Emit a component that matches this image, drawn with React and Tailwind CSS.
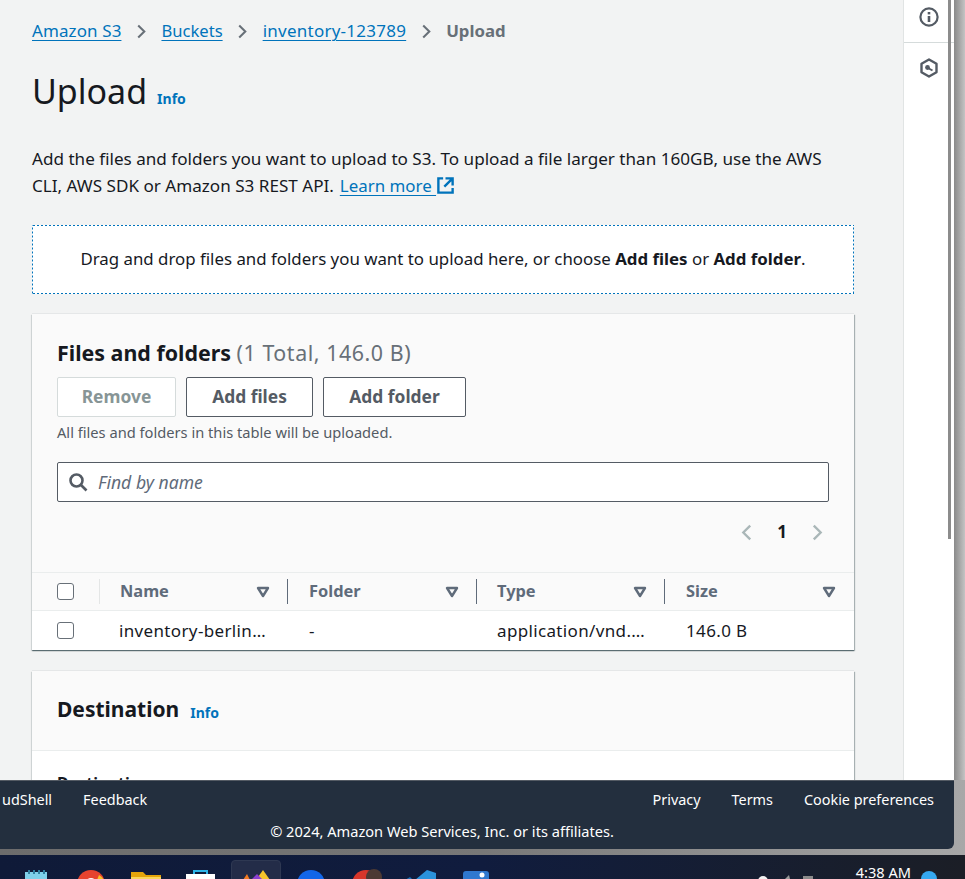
import React from "react";

const font = "font-['Noto_Sans','Open_Sans',sans-serif]";
const cardShadow = "shadow-[0_1px_1px_0_rgba(0,28,36,0.45),1px_1px_1px_0_rgba(0,28,36,0.25),-1px_1px_1px_0_rgba(0,28,36,0.08),0_-1px_0_0_rgba(0,28,36,0.05)]";

function Chevron({ left = false, className }) {
  return (
    <svg viewBox="0 0 10 16" className={className} fill="none">
      <path d={left ? "M8.5 1.5 2 8l6.5 6.5" : "M1.5 1.5 8 8l-6.5 6.5"} stroke="currentColor" strokeWidth="2.2" />
    </svg>
  );
}

function Crumb({ children, className }) {
  return <span className={`underline underline-offset-[3px] decoration-1 ${className}`}>{children}</span>;
}

function Sep() {
  return <Chevron className="w-[11px] h-[15px] mx-[14.5px] text-[#687078]" />;
}

function Caret() {
  return (
    <svg viewBox="0 0 16 16" className="size-[16px] text-[#5f6b7a]">
      <path d="M3 4h10l-5 8z" fill="none" stroke="currentColor" strokeWidth="2.4" strokeLinejoin="round" />
    </svg>
  );
}

function Checkbox() {
  return <div className="size-[17px] rounded-[3px] border border-[#687078] bg-white" />;
}

function HeaderCell({ label, className, divider = true }) {
  return (
    <div className={`flex items-center justify-between h-full ${className}`}>
      <span className="font-bold text-[#5f6b7a] text-[16.4px]">{label}</span>
      <div className="flex items-center">
        <Caret />
        {divider && <div className="w-px h-[25px] bg-[#5f6b7a] ml-[16px]" />}
      </div>
    </div>
  );
}

function Taskbar() {
  return (
    <div className="h-[24px] bg-gradient-to-r from-[#0f1a38] via-[#101c3e] to-[#1b1e26] flex items-start overflow-hidden relative">
      <div className="absolute left-[231px] top-[5px] w-[50px] h-[30px] rounded-[4px] bg-[#232c48] border border-[#2e3852]" />
      <div className="relative flex items-start h-full">
        <svg viewBox="0 0 22 10" className="absolute left-[25px] top-[15px] w-[22px] h-[10px]">
          <rect y="2" width="22" height="8" fill="#7fd0ea" />
          <path d="M3 0h2v4H3zM8 0h2v4H8zM13 0h2v4h-2zM18 0h2v4h-2z" fill="#2f7f9f" />
        </svg>
        <svg viewBox="0 0 28 10" className="absolute left-[77px] top-[15px] w-[28px] h-[10px]">
          <circle cx="14" cy="14" r="14" fill="#e5432f" />
          <circle cx="14" cy="14" r="6" fill="#fff" />
          <path d="M22 5a14 14 0 0 1 5 5h-7z" fill="#f6c026" />
        </svg>
        <svg viewBox="0 0 30 8" className="absolute left-[131px] top-[17px] w-[30px] h-[8px]">
          <path d="M0 0h12l3 3h15v5H0z" fill="#e5a50a" />
          <rect y="5" width="30" height="3" fill="#fbd65a" />
        </svg>
        <svg viewBox="0 0 29 9" className="absolute left-[186px] top-[15px] w-[29px] h-[9px]">
          <path d="M8 5V1h13v4" fill="none" stroke="#2eb4e8" strokeWidth="2" />
          <rect y="4" width="29" height="5" fill="#fff" />
        </svg>
        <svg viewBox="0 0 27 10" className="absolute left-[243px] top-[15px] w-[27px] h-[10px]">
          <path d="M0 10l4-6 3 6z" fill="#f47a20" />
          <path d="M13 10l7-10 7 10z" fill="#f7c52b" />
          <path d="M8 10l6-6 6 6z" fill="#8a3fd0" />
        </svg>
        <svg viewBox="0 0 28 10" className="absolute left-[297px] top-[15px] w-[28px] h-[10px]">
          <circle cx="14" cy="14" r="14" fill="#1266e8" />
        </svg>
        <svg viewBox="0 0 30 11" className="absolute left-[352px] top-[14px] w-[30px] h-[11px]">
          <circle cx="14" cy="15" r="14" fill="#d8362a" />
          <circle cx="22" cy="8" r="8" fill="#4d3a34" />
        </svg>
        <svg viewBox="0 0 31 10" className="absolute left-[405px] top-[15px] w-[31px] h-[10px]">
          <path d="M22 0l9 3v7H10z" fill="#2a92dc" />
          <path d="M0 10l5-3 3 3z" fill="#1a6fb8" />
        </svg>
        <svg viewBox="0 0 26 9" className="absolute left-[463px] top-[16px] w-[26px] h-[9px]">
          <rect width="26" height="12" rx="3" fill="#2f78cf" />
          <circle cx="19" cy="4" r="2.5" fill="#fff" />
        </svg>
        <svg viewBox="0 0 70 4" className="absolute left-[753px] top-[20px] w-[70px] h-[4px]">
          <circle cx="10" cy="6" r="5" fill="#f2f2f2" />
          <path d="M32 4l4-4 1 4z" fill="#9a9a9a" />
          <rect x="50" y="1" width="10" height="3" fill="#8a8a8a" />
        </svg>
      </div>
      <div className="ml-auto mr-[54px] text-white text-[14.6px] leading-[14px] pt-[10px] whitespace-nowrap">4:38 AM</div>
      <div className="absolute left-[921px] top-[16px] size-[16px] rounded-full bg-[#35a8f0]" />
    </div>
  );
}

export default function App() {
  return (
    <div className={`${font} relative w-[965px] h-[879px] overflow-hidden bg-gradient-to-r from-[#6c6c6c] via-[#787878] to-[#a8a8a8] text-[16px] text-[#16191f]`}>
      <div className="flex h-[780px]">
        <main className="w-[903px] h-[780px] overflow-hidden bg-[#f2f3f3] pl-[32px] pr-[49px]">
          <nav className="flex items-center h-[20px] mt-[21px] text-[17px] text-[#0073bb] whitespace-nowrap">
            <Crumb className="tracking-[0.1px]">Amazon S3</Crumb>
            <Sep />
            <Crumb className="text-[16.6px]">Buckets</Crumb>
            <Sep />
            <Crumb className="tracking-[0.25px]">inventory-123789</Crumb>
            <Sep />
            <span className="font-bold text-[#687078] text-[16.8px]">Upload</span>
          </nav>
          <div className="flex items-baseline mt-[26px] h-[48px]">
            <h1 className="text-[34px] leading-[48px] font-normal">Upload</h1>
            <span className="ml-[10px] text-[14px] font-bold text-[#0073bb]">Info</span>
          </div>
          <p className="mt-[30px] leading-[27px] text-[17.1px] whitespace-nowrap">
            Add the files and folders you want to upload to S3. To upload a file larger than 160GB, use the AWS
            <br />
            CLI, AWS SDK or Amazon S3 REST API.{" "}
            <span className="ml-[1.5px] text-[16.9px] text-[#0073bb] underline underline-offset-[3px] decoration-1">Learn more </span>
            <svg viewBox="0 0 16 16" className="inline w-[19px] h-[19px] text-[#0073bb] -mt-[4px]" fill="none" stroke="currentColor" strokeWidth="2">
              <path d="M14 8V2H8M14 2 7 9M6 2H2v12h12v-4" />
            </svg>
          </p>
          <div className="mt-[26px] h-[69px] pb-[2px] [background:linear-gradient(90deg,#0073bb_50%,transparent_50%)_top/4px_1px_repeat-x,linear-gradient(90deg,#0073bb_50%,transparent_50%)_bottom/4px_1px_repeat-x,linear-gradient(0deg,#0073bb_50%,transparent_50%)_left/1px_4px_repeat-y,linear-gradient(0deg,#0073bb_50%,transparent_50%)_right/1px_4px_repeat-y,#fff] flex items-center justify-center">
            <span className="text-[16.85px] whitespace-nowrap">
              Drag and drop files and folders you want to upload here, or choose <b>Add files</b> or <b>Add folder</b>.
            </span>
          </div>

          <section className={`mt-[20px] bg-[#fafafa] ${cardShadow}`}>
            <div className="px-[25px] pt-[25px]">
              <h2 className="text-[21.4px] leading-[28px] whitespace-nowrap">
                <b>Files and folders</b> <span className="text-[#687078] tracking-[0.55px]">(1 Total, 146.0 B)</span>
              </h2>
              <div className="flex gap-[10px] mt-[10px] text-[17.4px]">
                <div className="w-[119px] h-[40px] pb-[1px] flex items-center justify-center rounded-[2px] border border-[#d5dbdb] bg-white font-bold text-[#879596]">Remove</div>
                <div className="w-[127px] h-[40px] pb-[1px] flex items-center justify-center rounded-[2px] border border-[#545b64] bg-white font-bold text-[#545b64]">Add files</div>
                <div className="w-[143px] h-[40px] pb-[1px] flex items-center justify-center rounded-[2px] border border-[#545b64] bg-white font-bold text-[#545b64]">Add folder</div>
              </div>
              <p className="text-[14.66px] leading-[18px] mt-[6px] text-[#545b64]">All files and folders in this table will be uploaded.</p>
              <div className="mt-[21px] h-[40px] w-[772px] flex items-center border border-[#545b64] rounded-[2px] bg-white pl-[10px]">
                <svg viewBox="0 0 20 20" className="size-[20px] text-[#545b64]" fill="none" stroke="currentColor" strokeWidth="2.6">
                  <circle cx="8.5" cy="8.5" r="6" />
                  <path d="M13 13l5.5 5.5" />
                </svg>
                <span className="ml-[10px] italic text-[17.6px] text-[#5f6b7a]">Find by name</span>
              </div>
              <div className="flex items-center justify-end h-[20px] mt-[20px] pr-[6px]">
                <Chevron left className="w-[11px] h-[17px] text-[#aab7b8]" />
                <span className="mx-[25px] font-bold text-[17px]">1</span>
                <Chevron className="w-[11px] h-[17px] text-[#aab7b8]" />
              </div>
            </div>
            <div className="mt-[30px] flex items-center h-[39px] border-y border-[#eaeded]">
              <div className="w-[68px] pl-[25px] h-full flex items-center justify-between">
                <Checkbox />
                <div className="w-px h-[25px] bg-[#e4e6e6]" />
              </div>
              <HeaderCell label="Name" className="w-[188px] pl-[20px]" />
              <HeaderCell label="Folder" className="w-[189px] pl-[21px]" />
              <HeaderCell label="Type" className="w-[188px] pl-[20px]" />
              <HeaderCell label="Size" className="flex-1 pl-[21px] pr-[17px]" divider={false} />
            </div>
            <div className="flex items-center h-[39px] bg-white text-[17px] tracking-[0.35px] whitespace-nowrap">
              <div className="w-[68px] pl-[25px]"><Checkbox /></div>
              <div className="w-[188px] pl-[19px]">inventory-berlin…</div>
              <div className="w-[189px] pl-[21px]">-</div>
              <div className="w-[188px] pl-[20px]">application/vnd.…</div>
              <div className="flex-1 pl-[21px]">146.0 B</div>
            </div>
          </section>

          <section className={`mt-[21px] bg-[#fafafa] ${cardShadow}`}>
            <div className="h-[80px] pb-[2px] flex items-center px-[25px] border-b border-[#eaeded]">
              <h2 className="text-[21px] font-bold">Destination</h2>
              <span className="ml-[11px] mt-[6px] text-[14px] font-bold text-[#0073bb]">Info</span>
            </div>
            <div className="bg-white h-[60px] px-[25px] pt-[20px] font-bold">Destination</div>
          </section>
        </main>

        <aside className="w-[51px] h-[780px] bg-white border-l border-[#e1e4e4]">
          <div className="h-[43px] flex items-center justify-center border-b border-[#d5dbdb] pb-[8px]">
            <svg viewBox="0 0 20 20" className="size-[20px] text-[#545b64]" fill="none" stroke="currentColor" strokeWidth="2.2">
              <circle cx="10" cy="10" r="8.6" />
              <path d="M10 9v6" strokeWidth="2.6" />
              <path d="M10 5v2.4" strokeWidth="2.6" />
            </svg>
          </div>
          <div className="flex justify-center pt-[15px]">
            <svg viewBox="0 0 20 20" className="size-[20px] text-[#545b64]" fill="none">
              <path d="M10 1.5l7.5 4.3v8.4L10 18.5l-7.5-4.3V5.8z" stroke="currentColor" strokeWidth="2.4" strokeLinejoin="round" />
              <circle cx="8.5" cy="9.5" r="2.4" fill="currentColor" />
              <path d="M9 10l4.5 2.5" stroke="currentColor" strokeWidth="2" />
            </svg>
          </div>
        </aside>
        <div className="flex-1 h-[780px] bg-gradient-to-r from-[#8a8a8a] to-[#c4c4c4]" />
      </div>

      <div className="absolute left-[948px] top-0 w-[3px] h-[539px] bg-[#8c8c8c]" />

      <footer className="absolute left-0 top-[780px] w-[954px] h-[69px] bg-[#232f3e] border-t border-[#545b64] rounded-br-[6px] text-white text-[14.4px]">
        <div className="flex items-center h-[38px] pr-[20px]">
          <span className="ml-[2px]">udShell</span>
          <span className="ml-[31px]">Feedback</span>
          <span className="ml-auto">Privacy</span>
          <span className="ml-[31px]">Terms</span>
          <span className="ml-[31px]">Cookie preferences</span>
        </div>
        <div className="text-center text-[14.6px] mt-[2px] pr-[70px]">© 2024, Amazon Web Services, Inc. or its affiliates.</div>
      </footer>

      <div className="absolute left-0 top-[855px] w-full">
        <Taskbar />
      </div>
    </div>
  );
}
